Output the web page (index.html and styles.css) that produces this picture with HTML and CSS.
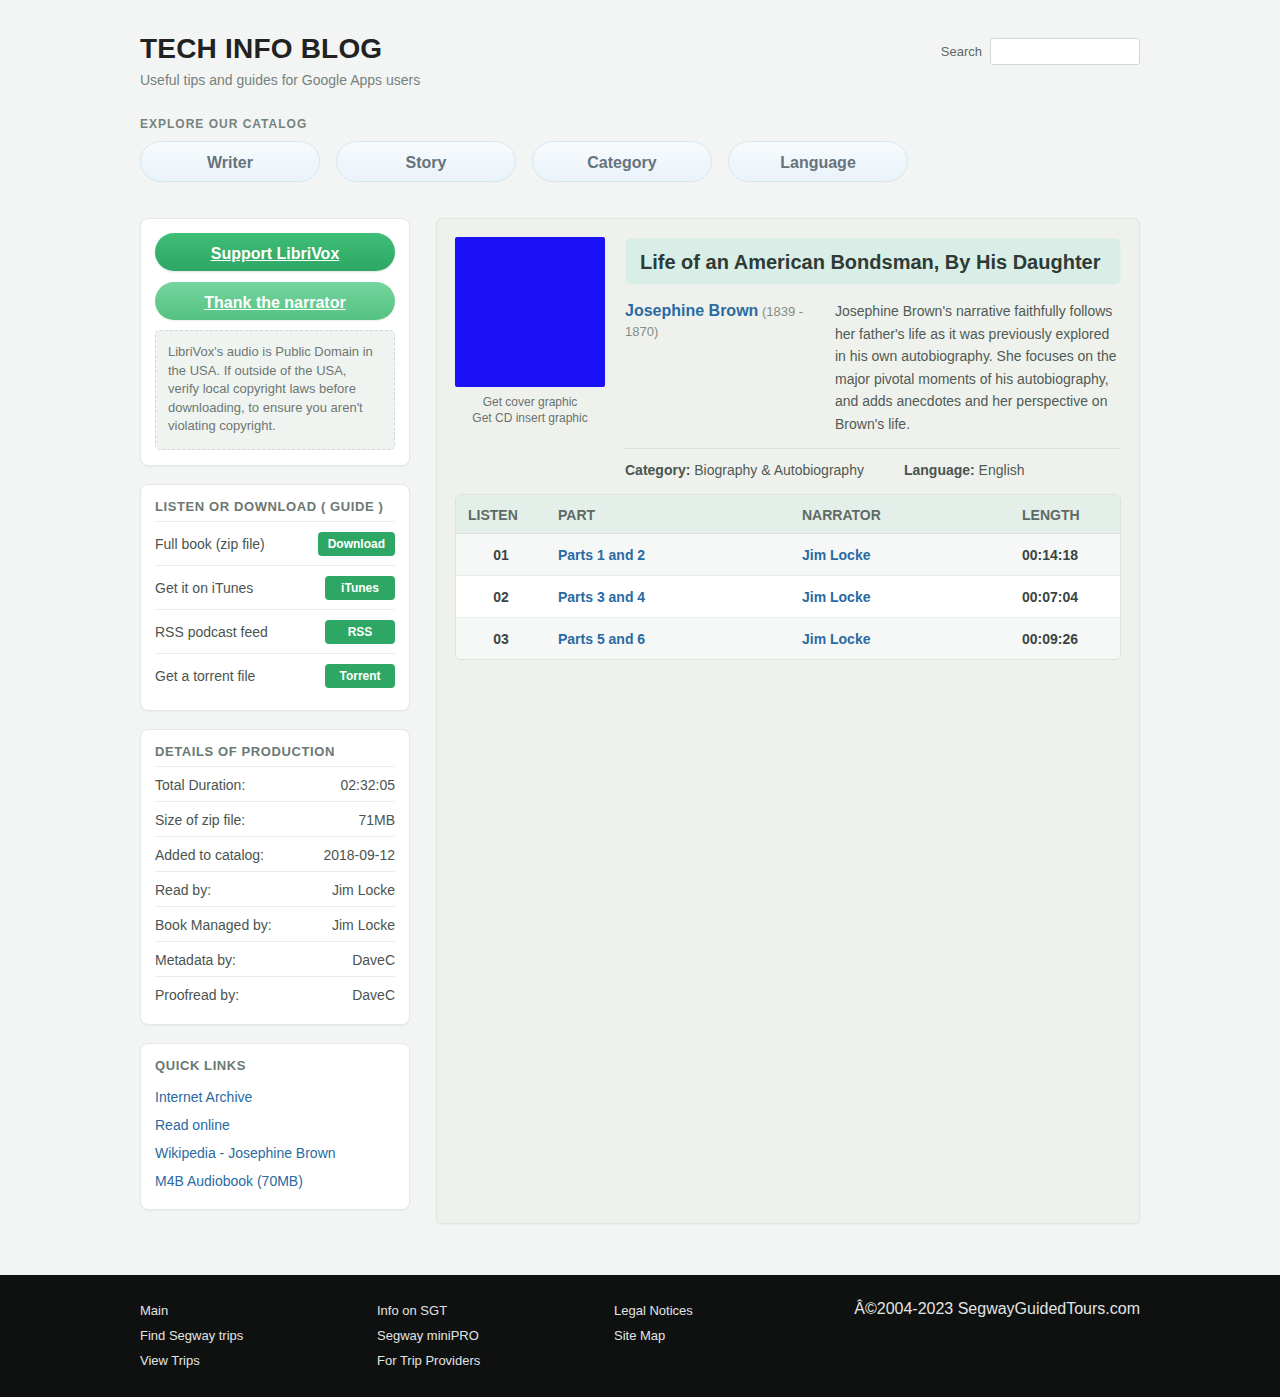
FILE: index.html
```html
<!DOCTYPE html>
<html lang="en">
<head>
<meta charset="utf-8">
<title>Tech Info Blog</title>
<link rel="stylesheet" href="styles.css">
</head>
<body>
<div class="wrap">
  <header class="site-header">
    <div class="brand">
      <h1 class="site-title">TECH INFO BLOG</h1>
      <p class="tagline">Useful tips and guides for Google Apps users</p>
    </div>
    <form class="search">
      <label class="search-label" for="q">Search</label>
      <input id="q" class="search-input" type="text">
    </form>
  </header>

  <section class="explore">
    <h2 class="explore-title">EXPLORE OUR CATALOG</h2>
    <nav class="pills">
      <a class="pill" href="#">Writer</a>
      <a class="pill" href="#">Story</a>
      <a class="pill" href="#">Category</a>
      <a class="pill" href="#">Language</a>
    </nav>
  </section>

  <div class="layout">
    <aside class="sidebar">
      <div class="card">
        <a class="btn-big btn-support" href="#">Support LibriVox</a>
        <a class="btn-big btn-thank" href="#">Thank the narrator</a>
        <p class="notice">LibriVox's audio is Public Domain in the USA. If outside of the USA, verify local copyright laws before downloading, to ensure you aren't violating copyright.</p>
      </div>

      <div class="card">
        <h3 class="card-title">LISTEN OR DOWNLOAD ( GUIDE )</h3>
        <ul class="dl-list">
          <li class="dl-row"><span>Full book (zip file)</span><a class="tag" href="#">Download</a></li>
          <li class="dl-row"><span>Get it on iTunes</span><a class="tag" href="#">iTunes</a></li>
          <li class="dl-row"><span>RSS podcast feed</span><a class="tag" href="#">RSS</a></li>
          <li class="dl-row"><span>Get a torrent file</span><a class="tag" href="#">Torrent</a></li>
        </ul>
      </div>

      <div class="card">
        <h3 class="card-title">DETAILS OF PRODUCTION</h3>
        <dl class="details">
          <div class="det-row"><dt>Total Duration:</dt><dd>02:32:05</dd></div>
          <div class="det-row"><dt>Size of zip file:</dt><dd>71MB</dd></div>
          <div class="det-row"><dt>Added to catalog:</dt><dd>2018-09-12</dd></div>
          <div class="det-row"><dt>Read by:</dt><dd>Jim Locke</dd></div>
          <div class="det-row"><dt>Book Managed by:</dt><dd>Jim Locke</dd></div>
          <div class="det-row"><dt>Metadata by:</dt><dd>DaveC</dd></div>
          <div class="det-row"><dt>Proofread by:</dt><dd>DaveC</dd></div>
        </dl>
      </div>

      <div class="card">
        <h3 class="card-title">QUICK LINKS</h3>
        <ul class="quick">
          <li><a href="#">Internet Archive</a></li>
          <li><a href="#">Read online</a></li>
          <li><a href="#">Wikipedia - Josephine Brown</a></li>
          <li><a href="#">M4B Audiobook (70MB)</a></li>
        </ul>
      </div>
    </aside>

    <main class="main">
      <div class="book">
        <div class="cover-col">
          <div class="cover"></div>
          <a class="cover-link" href="#">Get cover graphic</a>
          <a class="cover-link" href="#">Get CD insert graphic</a>
        </div>
        <div class="info">
          <h2 class="book-title">Life of an American Bondsman, By His Daughter</h2>
          <div class="about">
            <div class="author"><div class="author-line"><a class="author-name" href="#">Josephine Brown</a> <span class="dates">(1839 -</span></div><div class="dates">1870)</div></div>
            <p class="desc">Josephine Brown's narrative faithfully follows her father's life as it was previously explored in his own autobiography. She focuses on the major pivotal moments of his autobiography, and adds anecdotes and her perspective on Brown's life.</p>
          </div>
          <div class="meta">
            <span><b>Category:</b> Biography &amp; Autobiography</span>
            <span><b>Language:</b> English</span>
          </div>
        </div>
      </div>

      <div class="table-wrap">
        <table class="chapters">
          <thead>
            <tr><th class="c-listen">LISTEN</th><th class="c-part">PART</th><th class="c-narr">NARRATOR</th><th class="c-len">LENGTH</th></tr>
          </thead>
          <tbody>
            <tr><td class="num">01</td><td><a href="#">Parts 1 and 2</a></td><td><a href="#">Jim Locke</a></td><td class="len">00:14:18</td></tr>
            <tr><td class="num">02</td><td><a href="#">Parts 3 and 4</a></td><td><a href="#">Jim Locke</a></td><td class="len">00:07:04</td></tr>
            <tr><td class="num">03</td><td><a href="#">Parts 5 and 6</a></td><td><a href="#">Jim Locke</a></td><td class="len">00:09:26</td></tr>
          </tbody>
        </table>
      </div>
    </main>
  </div>
</div>

<footer class="footer">
  <div class="footer-inner">
    <ul class="f-col">
      <li><a href="#">Main</a></li>
      <li><a href="#">Find Segway trips</a></li>
      <li><a href="#">View Trips</a></li>
    </ul>
    <ul class="f-col">
      <li><a href="#">Info on SGT</a></li>
      <li><a href="#">Segway miniPRO</a></li>
      <li><a href="#">For Trip Providers</a></li>
    </ul>
    <ul class="f-col">
      <li><a href="#">Legal Notices</a></li>
      <li><a href="#">Site Map</a></li>
    </ul>
    <p class="copy">Â©2004-2023 SegwayGuidedTours.com</p>
  </div>
</footer>
</body>
</html>
```

FILE: styles.css
```css
* { box-sizing: border-box; }
html, body { margin: 0; padding: 0; }
body {
  background: #f3f5f4;
  font-family: "Liberation Sans", Arial, Helvetica, sans-serif;
  color: #3a4540;
}
a { text-decoration: none; }
ul { list-style: none; margin: 0; padding: 0; }

.wrap { width: 1000px; margin: 0 auto; padding-top: 33px; padding-bottom: 51px; }

.site-header { display: flex; justify-content: space-between; align-items: flex-start; }
.site-title { margin: 0; font-size: 28px; line-height: 32px; font-weight: 700; color: #222; letter-spacing: 0.2px; }
.tagline { margin: 7px 0 0; font-size: 14px; line-height: 16px; color: #76817c; }
.search { display: flex; align-items: center; gap: 8px; margin-top: 5px; }
.search-label { font-size: 13px; color: #5c6662; }
.search-input { width: 150px; height: 27px; border: 1px solid #d3d9d6; border-radius: 3px; background: #fff; }

.explore { margin-top: 29px; }
.explore-title { margin: 0; font-size: 12px; line-height: 14px; font-weight: 700; letter-spacing: 1px; color: #75837d; }
.pills { display: flex; gap: 16px; margin-top: 10px; }
.pill {
  width: 180px; height: 41px; padding-top: 2px;
  display: flex; align-items: center; justify-content: center;
  border: 1px solid #d6e6ef; border-radius: 21px;
  background: linear-gradient(#f8fbfd, #e9f3fa);
  font-size: 16px; font-weight: 700; color: #66737c;
}

.layout { display: flex; gap: 26px; margin-top: 36px; align-items: flex-start; }
.sidebar { width: 270px; flex: none; display: flex; flex-direction: column; gap: 18px; }
.card {
  background: #fff; border: 1px solid #e4e8e6; border-radius: 8px;
  padding: 14px 14px 15px;
  box-shadow: 0 1px 2px rgba(0,0,0,0.04);
}
.btn-big {
  display: flex; align-items: center; justify-content: center;
  height: 38px; border-radius: 19px; padding-top: 3px;
  font-size: 16px; font-weight: 700; color: #fff; text-decoration: underline;
}
.btn-support { background: linear-gradient(#3fbd76, #2ea764); box-shadow: 0 1px 2px rgba(0,0,0,0.12); }
.btn-thank { margin-top: 11px; background: linear-gradient(#74d59e, #55c281); box-shadow: 0 1px 2px rgba(0,0,0,0.08); }
.notice {
  margin: 10px 0 0; padding: 12px 19px 13px 12px;
  border: 1px dashed #d2d9d5; border-radius: 5px; background: #f0f4f1;
  font-size: 13px; line-height: 18.6px; color: #6d7772;
}

.card-title { margin: 0; padding: 0 0 7px; font-size: 13px; line-height: 15px; font-weight: 700; letter-spacing: 0.6px; color: #6b7873; }
.dl-row {
  display: flex; justify-content: space-between; align-items: center;
  height: 44px; border-top: 1px solid #e8ecea; padding-top: 2px;
  font-size: 14px; color: #4a5450;
}
.dl-list { margin-bottom: -2px; }
.tag {
  background: #2ea764; color: #fff; border-radius: 4px;
  font-size: 12px; font-weight: 700; height: 24px; min-width: 70px; padding: 0 10px;
  display: flex; align-items: center; justify-content: center;
}

.details { margin: 0 0 -2px; }
.det-row {
  display: flex; justify-content: space-between; align-items: center;
  height: 35px; border-top: 1px solid #e8ecea; padding-top: 2px; font-size: 14px; color: #4a5450;
}
.det-row dt, .det-row dd { margin: 0; }

.quick { padding-top: 3px; margin-bottom: -1px; }
.quick li { height: 28px; display: flex; align-items: center; font-size: 14px; }
.quick a { color: #2a6aa3; }

.main {
  flex: 1; min-height: 1006px;
  background: #eff2ec; border: 1px solid #e0e5df; border-radius: 6px;
  padding: 18px 18px 18px;
  box-shadow: 0 1px 2px rgba(0,0,0,0.04);
}
.book { display: flex; gap: 20px; }
.cover-col { width: 150px; flex: none; display: flex; flex-direction: column; align-items: center; }
.cover { width: 150px; height: 150px; background: #1a10f5; border-radius: 2px; margin-bottom: 7px; }
.cover-link { font-size: 12px; line-height: 16px; color: #6a736f; }
.info { flex: 1; }
.book-title {
  margin: 1px 0 0; padding: 2px 14px 0; height: 47px; display: flex; align-items: center;
  background: #d9eee6; border-radius: 6px; border: 1px solid #e3f1eb;
  font-size: 20px; font-weight: 700; color: #2f3a35;
}
.about { display: flex; gap: 20px; margin-top: 16px; }
.author { width: 190px; flex: none; font-size: 13px; line-height: 20px; color: #848c88; }
.author-name { font-size: 16px; font-weight: 700; color: #2a6aa3; }
.dates { font-size: 13px; color: #848c88; }
.desc { margin: 0; font-size: 14px; line-height: 22.5px; color: #505a55; margin-top: -1px; }
.meta {
  display: flex; gap: 40px; margin-top: 13px; padding-top: 13px;
  border-top: 1px solid #d9e0dc; font-size: 14px; color: #505a55;
}
.meta b { color: #4a5450; }

.table-wrap {
  margin-top: 16px; border: 1px solid #dde4e0; border-radius: 6px; overflow: hidden; background: #fff;
}
.chapters { width: 100%; border-collapse: collapse; font-size: 14px; }
.chapters th {
  height: 38px; text-align: left; background: #e5efe9; color: #5f6a65; font-weight: 700;
  border-bottom: 1px solid #d8e2dc; padding: 2px 0 0;
}
.chapters td { height: 42px; padding: 2px 0 0; border-top: 1px solid #e8ecea; font-weight: 700; color: #3c4541; }
.chapters tbody tr:first-child td { border-top: none; }
.chapters tbody tr:nth-child(odd) td { background: #f6f8f7; }
.chapters a { color: #2a6aa3; font-weight: 700; }
.c-listen { width: 102px; padding-left: 12px !important; }
.c-part { width: 244px; }
.c-narr { width: 220px; }
.num { text-align: center; padding-right: 12px !important; }

.footer { background: #0f1110; color: #e2e4e3; }
.footer-inner {
  width: 1000px; margin: 0 auto; padding: 23px 0 27px; height: 122px;
  display: flex;
}
.f-col { width: 237px; flex: none; }
.f-col li { height: 25px; display: flex; align-items: center; font-size: 13px; }
.f-col a { color: #e2e4e3; }
.copy { margin: 2px 0 0 auto; font-size: 16px; line-height: 18px; color: #e2e4e3; }
```
